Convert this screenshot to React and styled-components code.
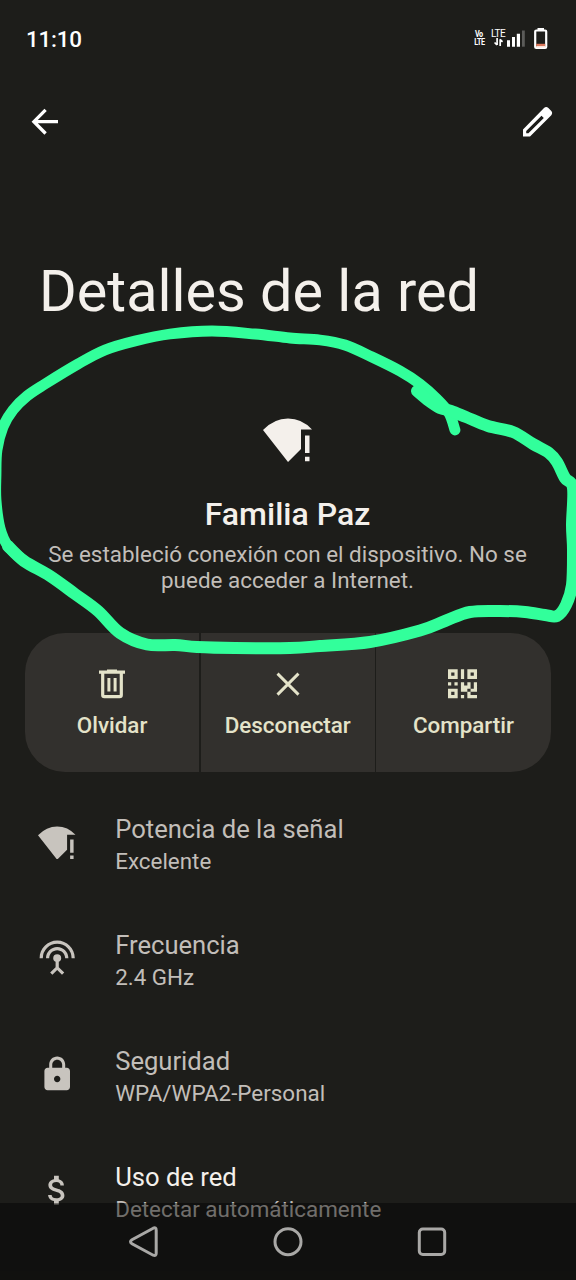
import React from 'react'
import styled, { createGlobalStyle } from 'styled-components'
import { MdLock, MdAttachMoney, MdSettingsInputAntenna } from 'react-icons/md'

const GlobalStyle = createGlobalStyle`
* {
    box-sizing: border-box;
}
body {
    margin: 0;
    background: #1d1d1a;
    font-family: Roboto, "Liberation Sans", sans-serif;
}
h1, h2, p {
    margin: 0;
}
svg {
    display: block;
    flex-shrink: 0;
}
`;

const Screen = styled.div`
position: relative;
width: 576px;
height: 1280px;
overflow: hidden;
background: #1d1d1a;
`;

const StatusBar = styled.div`
display: flex;
align-items: center;
justify-content: space-between;
height: 78px;
padding: 0 28px 0 26px;
color: #fff;
`;

const Time = styled.span`
font-size: 22.4px;
font-weight: 500;
line-height: 26px;
letter-spacing: -0.2px;
`;

const StatusIcons = styled.div`
display: flex;
align-items: flex-start;
height: 22px;
`;

const Tiny = styled.div`
display: flex;
flex-direction: column;
align-items: ${p => p.$center ? 'center' : 'flex-start'};
width: ${p => p.$width}px;
margin: 2px ${p => p.$gap}px 0 0;
font-size: ${p => p.$size}px;
font-weight: ${p => p.$weight};
line-height: 8px;
letter-spacing: ${p => p.$spacing || 0}px;

span {
    transform: scaleX(${p => p.$squeeze || 1});
}
`;

const AppBar = styled.div`
display: flex;
align-items: center;
justify-content: space-between;
height: 87px;
padding: 0 23px 0 31px;
`;

const Title = styled.h1`
padding: 93px 0 0 39px;
font-size: 57.6px;
font-weight: 400;
line-height: 68px;
color: #f4f0eb;
white-space: nowrap;
`;

const Hero = styled.section`
display: flex;
flex-direction: column;
align-items: center;
height: 307px;
padding: 92px 1px 0 0;
text-align: center;
`;

const NetworkName = styled.h2`
margin-top: 33px;
font-size: 32px;
font-weight: 500;
line-height: 38px;
color: #f4f0eb;
`;

const Description = styled.p`
width: 500px;
margin-top: 8px;
font-size: 22.4px;
line-height: 26.3px;
letter-spacing: 0.02px;
color: #c2beb9;
`;

const Actions = styled.div`
display: grid;
grid-template-columns: 1fr 1fr 1fr;
gap: 1.5px;
height: 139px;
margin: 0 25.500px 0 25px;
border-radius: 40px;
overflow: hidden;
`;

const Action = styled.button`
display: flex;
flex-direction: column;
align-items: center;
padding: 35px 0 0;
border: 0;
background: #32302d;
color: #e4e3c9;
font-family: inherit;
font-size: 22.4px;
font-weight: 500;
line-height: 26px;

span {
    margin-top: 12px;
}
`;

const Row = styled.div`
display: flex;
align-items: flex-start;
height: 116px;
padding-left: 38.400px;
color: #c8c4be;
`;

const IconSlot = styled.div`
width: 76.800px;
padding-top: ${p => p.$top || 38}px;
`;

const RowText = styled.div`
padding-top: 28px;
line-height: 32px;
white-space: nowrap;
`;

const RowTitle = styled.p`
font-size: 25.6px;
color: ${p => p.$active ? '#f4f0eb' : '#c2beb9'};
`;

const RowSummary = styled.p`
font-size: 22.4px;
color: #c2beb9;
`;

const Spacer = styled.div`
height: 13px;
`;

const NavBar = styled.nav`
position: absolute;
left: 0;
right: 0;
bottom: 0;
display: flex;
align-items: center;
justify-content: center;
gap: 112px;
height: 77px;
background: rgba(0, 0, 0, 0.42);
`;

const Marker = styled.svg`
position: absolute;
top: 0;
left: 0;
pointer-events: none;
`;

const VoLte = () => (
    <Tiny $width={12} $gap={6} $size={9} $weight={700} $spacing={-0.5} $squeeze={0.8} $center>
        <span>Vo</span>
        <span>LTE</span>
    </Tiny>
)

const LteData = () => (
    <Tiny $width={16} $gap={0} $size={10} $weight={400} $spacing={-0.5}>
        <span>LTE</span>
        <svg width="12" height="8" viewBox="0 0 12 8" fill="none" stroke="#fff" strokeWidth="1.7">
            <path d="M6.1 0v7M3.6 4.5 6 7M9.2 8V1.2M9 1.4l2.6 2.4" />
        </svg>
    </Tiny>
)

const Signal = () => (
    <svg width="18" height="22" viewBox="0 0 18 22" fill="#fff">
        <path d="M0 12.2H3v6.500H0zM5 9H8v9.700H5zM9.800 5.700H13v13H9.800z" />
        <path d="M15 2.500h2.800v16.200H15z" fill="#5b5b59" />
    </svg>
)

const Battery = () => (
    <svg width="14" height="22" viewBox="0 0 14 22" style={{ marginLeft: 9 }}>
        <path d="M3.500 0h6.500v2.500H3.500z" fill="#fff" />
        <rect x="1.200" y="2.500" width="11" height="17.500" rx="1" fill="none" stroke="#fff" strokeWidth="2.200" />
        <path d="M2.200 15.800h9v2.500h-9z" fill="#d9785c" />
        <path d="M2.200 18h9v1.500h-9z" fill="#fbe3da" />
    </svg>
)

const BackArrow = () => (
    <svg width="28" height="28" viewBox="0 0 28 28" fill="none" stroke="#fff" strokeWidth="3.300">
        <path d="M27 13.700H3.500M14.600 1.900 2.900 13.700l11.700 11.800" />
    </svg>
)

const Pencil = () => (
    <svg width="30" height="30" viewBox="0 0 30 30">
        <path fillRule="evenodd" fill="#fff" d="M0 29.500v-7L21 1Q23.200 -.8 25.400 1L28.300 3.900Q30 6 28.300 8.200L7 29.500ZM3.200 26.300h2.200L20.800 11 18.500 8.700 3.200 24.100Z" />
    </svg>
)

const WifiAlert = ({ size = 49, color = '#f4f0eb' }) => (
    <svg width={size} height={size * 44 / 49} viewBox="0 0 49 44" fill={color}>
        <path d="M0 12Q11 .5 25 .5T49 11.500H38V31L25 44Z" />
        <path d="M42 17.500h4.500V35H42zM42 38.700h4.500v4.500H42z" />
    </svg>
)

const Trash = () => (
    <svg width="30" height="32" viewBox="0 0 30 32" fill="none" stroke="currentColor">
        <path d="M2 4.200h26" strokeWidth="3.200" />
        <path d="M10 2.700h10" strokeWidth="2.500" />
        <path d="M5.700 4v23q0 1.700 1.700 1.700h15.200q1.700 0 1.700-1.700V4" strokeWidth="3.200" />
        <path d="M11.900 10v13.500M18.100 10v13.500" strokeWidth="3" />
    </svg>
)

const Close = () => (
    <svg width="30" height="32" viewBox="0 0 30 32" fill="none" stroke="currentColor" strokeWidth="2.900">
        <path d="M4.500 5.600 25.500 26.600M25.500 5.600 4.500 26.600" />
    </svg>
)

const QrCode = () => (
    <svg width="30" height="32" viewBox="0 0 9.300 9.920" fill="currentColor">
        <g transform="translate(0 .4)">
            <path fillRule="evenodd" d="M0 0h3v3H0zM1 1v1h1V1zM6 0h3v3H6zM7 1v1h1V1zM0 6h3v3H0zM1 7v1h1V7z" />
            <path d="M4 0h1v3H4zM0 4h1v1H0zM2 4h1v1H2zM4 4h1v1h1V4h1v2H6v1H4zM8 4h1v3H7V6h1zM6 7h1v1h2v1H6zM4 8h1v1H4z" />
        </g>
    </svg>
)

const actions = [
    { id: 1, name: 'Olvidar', icon: <Trash /> },
    { id: 2, name: 'Desconectar', icon: <Close /> },
    { id: 3, name: 'Compartir', icon: <QrCode /> },
]

const details = [
    { id: 1, title: 'Potencia de la señal', summary: 'Excelente', icon: <WifiAlert size={37.5} color="#c8c4be" />, top: 40.5 },
    { id: 2, title: 'Frecuencia', summary: '2.4 GHz', icon: <MdSettingsInputAntenna size={38.4} /> },
    { id: 3, title: 'Seguridad', summary: 'WPA/WPA2-Personal', icon: <MdLock size={38.4} /> },
    { id: 4, title: 'Uso de red', summary: 'Detectar automáticamente', icon: <MdAttachMoney size={38.4} />, active: true },
]

// the marker presses harder along the bottom than along the top
const topStroke = [
    [455, 430], [449, 413], [437, 399], [420, 384], [400, 371], [372, 357], [345, 345], [320, 340],
    [290, 338], [255, 334], [212, 331], [170, 334], [135, 341], [105, 350], [78, 364], [45, 384],
    [27, 396], [13, 410], [3, 427], [-3, 450], [-4, 475], [-4, 500], [0, 528], [8, 546], [24, 561],
]

const bottomStroke = [
    [8, 546], [24, 561], [50, 576], [75, 594], [98, 611], [120, 633], [147, 644.5], [175, 645],
    [197, 647], [235, 648], [290, 648], [320, 646], [370, 642], [420, 630.5], [445, 621], [470, 612],
    [500, 611], [525, 612], [545, 615], [557, 616], [566, 605], [572, 585], [573, 550], [572, 525],
    [573, 488], [565, 478], [557, 462], [549, 453], [533, 444], [513, 432], [488, 426], [466, 417],
    [451, 411], [440, 408], [429, 401], [417, 391],
]

// catmull-rom through the points, written as cubic beziers
const smooth = (pts) => pts.slice(1).reduce((d, p, i) => {
    const a = pts[i - 1] || pts[i]
    const b = pts[i]
    const c = pts[i + 2] || p
    return `${d}C${b[0] + (p[0] - a[0]) / 6} ${b[1] + (p[1] - a[1]) / 6} ${p[0] - (c[0] - b[0]) / 6} ${p[1] - (c[1] - b[1]) / 6} ${p[0]} ${p[1]}`
}, `M${pts[0][0]} ${pts[0][1]}`)

const App = () => {
    return (
        <>
            <GlobalStyle />
            <Screen>
                <StatusBar>
                    <Time>11:10</Time>
                    <StatusIcons>
                        <VoLte />
                        <LteData />
                        <Signal />
                        <Battery />
                    </StatusIcons>
                </StatusBar>
                <AppBar>
                    <BackArrow />
                    <Pencil />
                </AppBar>
                <Title>Detalles de la red</Title>
                <Hero>
                    <WifiAlert />
                    <NetworkName>Familia Paz</NetworkName>
                    <Description>Se estableció conexión con el dispositivo. No se puede acceder a Internet.</Description>
                </Hero>
                <Actions>
                    {actions.map(item => (
                        <Action key={item.id}>
                            {item.icon}
                            <span>{item.name}</span>
                        </Action>
                    ))}
                </Actions>
                <Spacer />
                {details.map(item => (
                    <Row key={item.id}>
                        <IconSlot $top={item.top}>{item.icon}</IconSlot>
                        <RowText>
                            <RowTitle $active={item.active}>{item.title}</RowTitle>
                            <RowSummary>{item.summary}</RowSummary>
                        </RowText>
                    </Row>
                ))}
                <NavBar>
                    <svg width="32" height="32" viewBox="0 0 32 32" fill="none" stroke="#a9a8a6" strokeWidth="3">
                        <path d="M25.200 2.200 4 13.700q-3 2 0 4l21.200 11.500q3 1.200 3-2V4.200q0-3.200-3-2Z" />
                    </svg>
                    <svg width="32" height="32" viewBox="0 0 32 32" fill="none" stroke="#a9a8a6" strokeWidth="3">
                        <circle cx="16" cy="15.700" r="13" />
                    </svg>
                    <svg width="32" height="32" viewBox="0 0 32 32" fill="none" stroke="#a9a8a6" strokeWidth="3">
                        <rect x="3.300" y="3" width="25.400" height="25.400" rx="3.500" />
                    </svg>
                </NavBar>
                <Marker width="576" height="1280" viewBox="0 0 576 1280" fill="none" stroke="#32ff9b" strokeLinecap="round" strokeLinejoin="round">
                    <path d={smooth(topStroke)} strokeWidth="10.800" />
                    <path d={smooth(bottomStroke)} strokeWidth="12" />
                </Marker>
            </Screen>
        </>
    )
}

export default App
